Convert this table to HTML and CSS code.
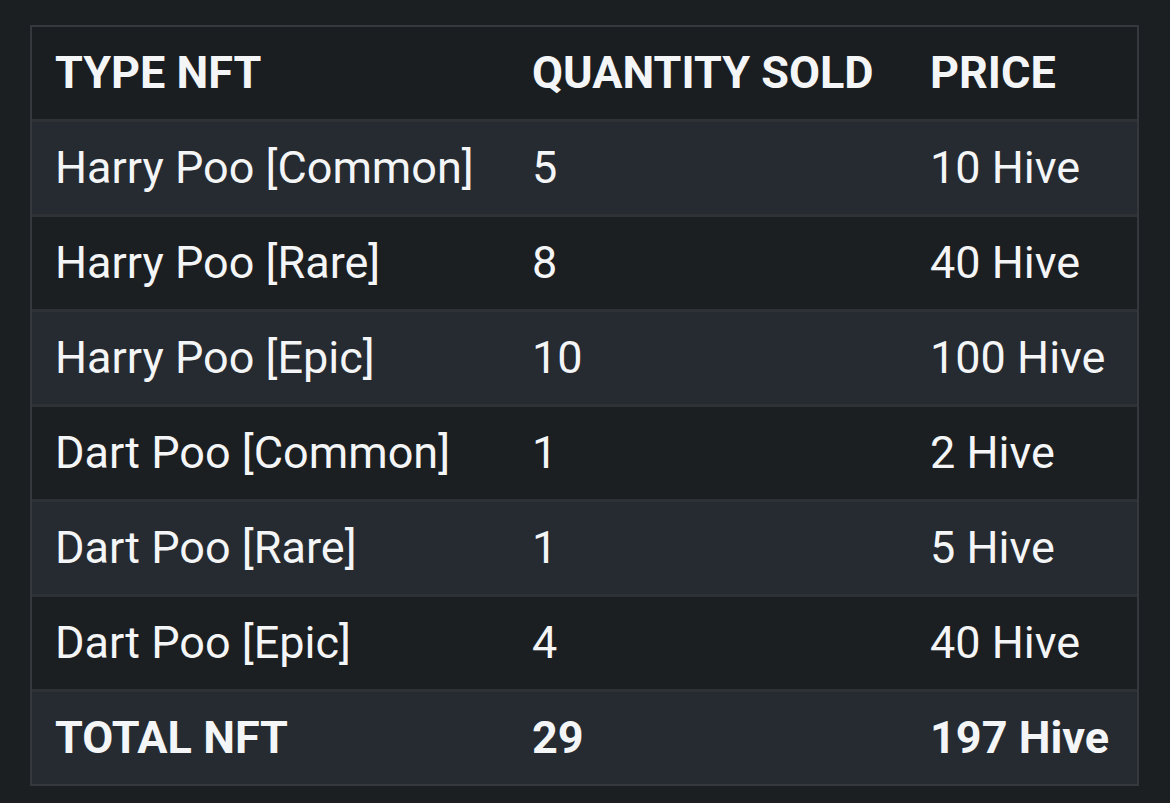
FILE: index.html
```html
<!DOCTYPE html>
<html>
<head>
<meta charset="utf-8">
<link rel="stylesheet" href="styles.css">
</head>
<body>
<table class="nft-table">
  <thead>
    <tr>
      <th class="c1">TYPE NFT</th>
      <th class="c2">QUANTITY SOLD</th>
      <th class="c3">PRICE</th>
    </tr>
  </thead>
  <tbody>
    <tr class="light"><td>Harry Poo [Common]</td><td>5</td><td>10 Hive</td></tr>
    <tr class="dark"><td>Harry Poo [Rare]</td><td>8</td><td>40 Hive</td></tr>
    <tr class="light"><td>Harry Poo [Epic]</td><td>10</td><td>100 Hive</td></tr>
    <tr class="dark"><td>Dart Poo [Common]</td><td>1</td><td>2 Hive</td></tr>
    <tr class="light"><td>Dart Poo [Rare]</td><td>1</td><td>5 Hive</td></tr>
    <tr class="dark"><td>Dart Poo [Epic]</td><td>4</td><td>40 Hive</td></tr>
    <tr class="light total"><td>TOTAL NFT</td><td>29</td><td>197 Hive</td></tr>
  </tbody>
</table>
</body>
</html>
```
FILE: styles.css
```css
html, body {
  margin: 0;
  padding: 0;
  background: #1c1f22;
}
body {
  padding: 25px 0 0 30px;
  font-family: Roboto, "Liberation Sans", sans-serif;
  color: #f4f5f6;
}
.nft-table {
  border-collapse: separate;
  border-spacing: 0;
  border: 2px solid #35383c;
  width: 1109px;
  table-layout: fixed;
}
.nft-table th,
.nft-table td {
  height: 92px;
  padding: 0 0 0 23px;
  text-align: left;
  vertical-align: middle;
  font-size: 45px;
  line-height: 1.2;
  white-space: nowrap;
  box-sizing: border-box;
}
.nft-table th {
  font-weight: 700;
  background: #1b1e21;
  border-bottom: 3px solid #2e3135;
  height: 95px;
}
.nft-table td {
  font-weight: 400;
  border-bottom: 3px solid #2e3135;
  height: 95px;
}
.nft-table tr:last-child td {
  border-bottom: 0;
  height: 92px;
}
.c1 { width: 477px; }
.c2 { width: 398px; }
.light td { background: #252b31; }
.dark td { background: #1c1f22; }
.total td { font-weight: 700; }
```
